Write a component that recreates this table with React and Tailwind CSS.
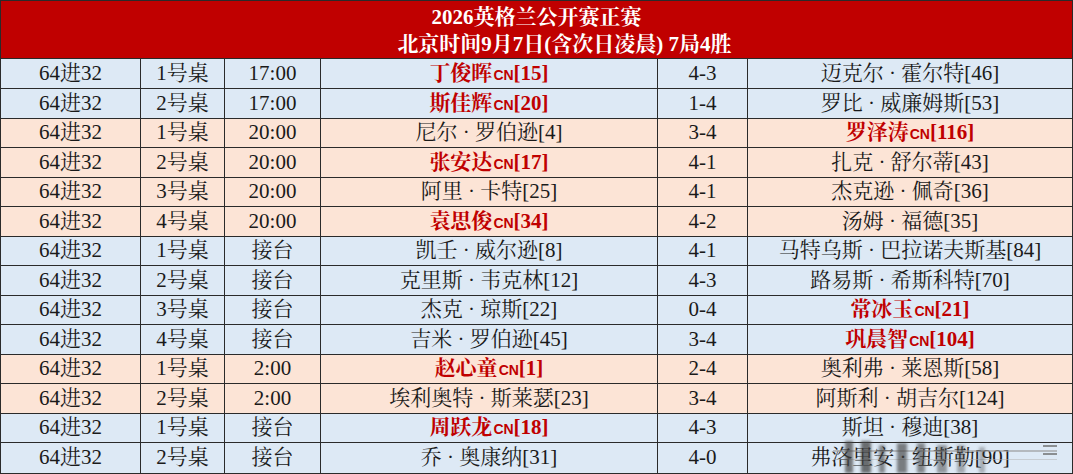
import React from "react";

const BLUE = "bg-[#dde9f5]";
const PEACH = "bg-[#fce4d6]";

const rows = [
  { t: "1号桌", time: "17:00", a: { n: "丁俊晖", s: "15", cn: true }, sc: "4-3", b: { n: "迈克尔 · 霍尔特[46]" }, bg: BLUE, h: "h-[30px]" },
  { t: "2号桌", time: "17:00", a: { n: "斯佳辉", s: "20", cn: true }, sc: "1-4", b: { n: "罗比 · 威廉姆斯[53]" }, bg: BLUE, h: "h-[30px]" },
  { t: "1号桌", time: "20:00", a: { n: "尼尔 · 罗伯逊[4]" }, sc: "3-4", b: { n: "罗泽涛", s: "116", cn: true }, bg: PEACH, h: "h-[29px]" },
  { t: "2号桌", time: "20:00", a: { n: "张安达", s: "17", cn: true }, sc: "4-1", b: { n: "扎克 · 舒尔蒂[43]" }, bg: PEACH, h: "h-[30px]" },
  { t: "3号桌", time: "20:00", a: { n: "阿里 · 卡特[25]" }, sc: "4-1", b: { n: "杰克逊 · 佩奇[36]" }, bg: PEACH, h: "h-[29px]" },
  { t: "4号桌", time: "20:00", a: { n: "袁思俊", s: "34", cn: true }, sc: "4-2", b: { n: "汤姆 · 福德[35]" }, bg: PEACH, h: "h-[30px]" },
  { t: "1号桌", time: "接台", a: { n: "凯壬 · 威尔逊[8]" }, sc: "4-1", b: { n: "马特乌斯 · 巴拉诺夫斯基[84]" }, bg: BLUE, h: "h-[29px]" },
  { t: "2号桌", time: "接台", a: { n: "克里斯 · 韦克林[12]" }, sc: "4-3", b: { n: "路易斯 · 希斯科特[70]" }, bg: BLUE, h: "h-[30px]" },
  { t: "3号桌", time: "接台", a: { n: "杰克 · 琼斯[22]" }, sc: "0-4", b: { n: "常冰玉", s: "21", cn: true }, bg: BLUE, h: "h-[29px]" },
  { t: "4号桌", time: "接台", a: { n: "吉米 · 罗伯逊[45]" }, sc: "3-4", b: { n: "巩晨智", s: "104", cn: true }, bg: BLUE, h: "h-[30px]" },
  { t: "1号桌", time: "2:00", a: { n: "赵心童", s: "1", cn: true }, sc: "2-4", b: { n: "奥利弗 · 莱恩斯[58]" }, bg: PEACH, h: "h-[29px]" },
  { t: "2号桌", time: "2:00", a: { n: "埃利奥特 · 斯莱瑟[23]" }, sc: "3-4", b: { n: "阿斯利 · 胡吉尔[124]" }, bg: PEACH, h: "h-[30px]" },
  { t: "1号桌", time: "接台", a: { n: "周跃龙", s: "18", cn: true }, sc: "4-3", b: { n: "斯坦 · 穆迪[38]" }, bg: BLUE, h: "h-[29px]" },
  { t: "2号桌", time: "接台", a: { n: "乔 · 奥康纳[31]" }, sc: "4-0", b: { n: "弗洛里安 · 纽斯勒[90]" }, bg: BLUE, h: "h-[30px]" },
];

function Name({ p }) {
  if (p.cn) {
    return (
      <span className="font-bold text-[#c00000] whitespace-nowrap">
        {p.n}
        <span className="font-['Liberation_Sans',sans-serif] text-[14px] font-bold ml-[1px]">CN</span>
        [{p.s}]
      </span>
    );
  }
  return <span className="whitespace-nowrap">{p.n}</span>;
}

const cell = "flex items-center justify-center border-r border-[#2a2a2a] overflow-hidden";

function Watermark() {
  const bars = [
    [12, 4, 8, 32, 0.7],
    [28, 4, 10, 32, 0.75],
    [46, 8, 6, 28, 0.6],
    [64, 6, 10, 30, 0.65],
    [84, 6, 8, 30, 0.6],
    [104, 8, 10, 28, 0.5],
    [124, 8, 8, 28, 0.4],
    [146, 10, 6, 26, 0.35],
  ];
  return (
    <svg className="absolute left-[832px] top-[436px] pointer-events-none" width="226" height="38" viewBox="0 0 226 38">
      <defs>
        <filter id="wb" x="-50%" y="-20%" width="200%" height="140%">
          <feGaussianBlur stdDeviation="1.8" />
        </filter>
      </defs>
      <rect x="0" y="13" width="224" height="2" fill="#9a9a9a" opacity="0.6" />
      <rect x="0" y="22" width="224" height="1" fill="#b0b0b0" opacity="0.5" />
      <g filter="url(#wb)">
        {bars.map(([x, y, w, h, o], i) => (
          <rect key={i} x={x} y={y} width={w} height={h} fill="#444" opacity={o} />
        ))}
      </g>
      <rect x="210" y="8" width="14" height="2" fill="#666" opacity="0.7" />
      <rect x="210" y="16" width="14" height="2" fill="#666" opacity="0.7" />
    </svg>
  );
}

export default function App() {
  return (
    <div className="relative w-[1073px] h-[474px] overflow-hidden border border-[#2a2a2a] flex flex-col font-['Liberation_Serif','Noto_Serif_CJK_SC','Noto_Sans_CJK_SC',serif] text-[#1a1a1a] text-[21px]">
      <div className="h-[58px] shrink-0 bg-[#c00000] border-b border-[#2a2a2a] flex flex-col items-center pt-[3px] text-white font-bold text-[21px] leading-[27px]">
        <div>2026英格兰公开赛正赛</div>
        <div className="pl-[56px]">北京时间9月7日(含次日凌晨) 7局4胜</div>
      </div>
      <div className="flex flex-col">
        {rows.map((r, i) => (
          <div
            key={i}
            className={`grid grid-cols-[140px_84px_96px_337px_90px_1fr] shrink-0 ${r.h} ${r.bg} ${i < rows.length - 1 ? "border-b border-[#2a2a2a]" : ""}`}
          >
            <div className={cell}>64进32</div>
            <div className={cell}>{r.t}</div>
            <div className={cell}>{r.time}</div>
            <div className={cell}><Name p={r.a} /></div>
            <div className={cell}>{r.sc}</div>
            <div className="flex items-center justify-center overflow-hidden"><Name p={r.b} /></div>
          </div>
        ))}
      </div>
      <Watermark />
    </div>
  );
}
